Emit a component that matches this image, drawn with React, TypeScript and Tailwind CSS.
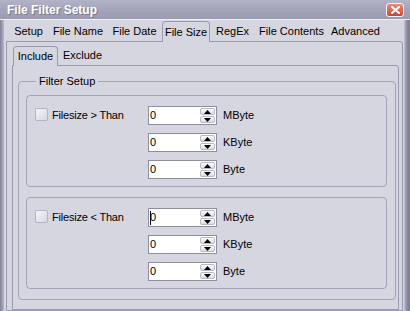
import React from 'react';

const tabs = [
  { label: 'Setup', w: 'w-[41px]' },
  { label: 'File Name', w: 'w-[58px]' },
  { label: 'File Date', w: 'w-[55px]' },
  { label: 'File Size', w: 'w-[48px]', active: true },
  { label: 'RegEx', w: 'w-[45px]' },
  { label: 'File Contents', w: 'w-[73px]' },
  { label: 'Advanced', w: 'w-[55px]' },
];

const Arrow: React.FC<{ up?: boolean }> = ({ up }) => (
  <svg width="7" height="4" viewBox="0 0 7 4">
    {up ? <path d="M3.5 0 L7 4 L0 4 Z" fill="#000" /> : <path d="M0 0 L7 0 L3.5 4 Z" fill="#000" />}
  </svg>
);

const SpinBox: React.FC<{ unit: string; caret?: boolean }> = ({ unit, caret }) => (
  <div className="flex items-center gap-[6px] h-[19px]">
    <div className="flex w-[69px] h-[19px] bg-white border border-[#8e8ea0]">
      <div className="flex-1 flex items-center pl-[1px]">
        {caret && <span className="inline-block w-[1px] h-[14px] bg-black -mr-[1px] relative" />}
        <span className="text-[11px] leading-none text-black">0</span>
      </div>
      <div className="flex flex-col w-[16px] py-[1px] pr-[1px] gap-[1px]">
        <div className="flex-1 flex items-center justify-center rounded-[2px] border border-[#b9b9c6] bg-gradient-to-b from-white to-[#dadae3]">
          <Arrow up />
        </div>
        <div className="flex-1 flex items-center justify-center rounded-[2px] border border-[#b9b9c6] bg-gradient-to-b from-white to-[#dadae3]">
          <Arrow />
        </div>
      </div>
    </div>
    <span className="text-[11px] text-black">{unit}</span>
  </div>
);

const SizeGroup: React.FC<{ label: string; caret?: boolean }> = ({ label, caret }) => (
  <div className="flex border border-[#a4a4b6] rounded-[4px] pt-[10px] pb-[7px]">
    <div className="w-[121px] h-[19px] flex items-center gap-[4px] pl-[8px]">
      <span className="w-[13px] h-[13px] -mt-[2px] rounded-[2px] border border-[#b4b4c2] bg-gradient-to-br from-[#f6f6f9] to-[#d6d6e0]" />
      <span className="text-[11px] text-black -mt-[1px] tracking-[-0.2px]">{label}</span>
    </div>
    <div className="flex flex-col gap-[8px]">
      <SpinBox unit="MByte" caret={caret} />
      <SpinBox unit="KByte" />
      <SpinBox unit="Byte" />
    </div>
  </div>
);

export default function App() {
  return (
    <div className="w-[410px] h-[311px] overflow-hidden flex flex-col bg-[#d6d6e0] font-['Liberation_Sans',Arial,sans-serif] select-none">
      {/* Title bar */}
      <div className="h-[20px] shrink-0 flex items-center justify-between pl-[7px] pr-[6px] bg-gradient-to-b from-[#b3b3c7] via-[#a4a4ba] to-[#9a9ab0] border-b border-[#f0f0f4]">
        <span className="text-[12px] font-bold text-white [text-shadow:1px_1px_0_#7a7a90]">File Filter Setup</span>
        <div className="w-[18px] h-[14px] -mb-[1px] rounded-[3px] border border-[#f4f4f8] bg-gradient-to-b from-[#ec8c78] to-[#c9452f] flex items-center justify-center">
          <svg width="9" height="8" viewBox="0 0 9 8">
            <path d="M1 1 L8 7 M8 1 L1 7" stroke="#fff" strokeWidth="2" strokeLinecap="square" />
          </svg>
        </div>
      </div>

      <div className="flex flex-1">
        {/* left frame */}
        <div className="w-[4px] bg-gradient-to-r from-[#7f7f97] via-[#9c9cb2] to-[#b8b8ca]" />

        {/* client */}
        <div className="flex-1 flex flex-col pl-[2px] pr-[1px]">
          <div className="h-[21px] flex items-end pl-[2px]">
            {tabs.map((t) =>
              t.active ? (
                <div
                  key={t.label}
                  className={`${t.w} h-[21px] -mb-[1px] relative z-10 flex items-center justify-center text-[11px] text-black bg-[#d6d6e0] border border-b-0 border-[#9a9ab0] rounded-t-[4px]`}
                >
                  {t.label}
                </div>
              ) : (
                <div key={t.label} className={`${t.w} h-[20px] flex items-center justify-center text-[11px] text-black`}>
                  {t.label}
                </div>
              )
            )}
          </div>

          {/* outer panel */}
          <div className="flex-1 border border-[#9a9ab0] rounded-tr-[3px] flex flex-col pr-[3px]">
            <div className="h-[23px] flex items-end pl-[6px]">
              <div className="w-[45px] h-[20px] -mb-[1px] relative z-10 flex items-center justify-center text-[11px] text-black bg-[#d6d6e0] border border-b-0 border-[#9a9ab0] rounded-t-[4px]">
                Include
              </div>
              <div className="w-[45px] ml-[2px] h-[19px] flex items-center justify-center text-[11px] text-black">
                Exclude
              </div>
            </div>

            {/* inner panel */}
            <div className="ml-[5px] flex-1 border border-[#9a9ab0] rounded-tr-[3px] pt-[8px] pl-[5px] pr-[2px]">
              <fieldset className="border border-[#a4a4b6] rounded-[4px] px-[7px] pr-[8px] pb-[10px]">
                <legend className="ml-[10px] px-[3px] text-[11px] leading-[14px] text-black">Filter Setup</legend>
                <div className="flex flex-col gap-[10px] pt-[7px]">
                  <SizeGroup label="Filesize > Than" />
                  <SizeGroup label="Filesize < Than" caret />
                </div>
              </fieldset>
            </div>
          </div>
        </div>

        {/* right frame */}
        <div className="w-[6px] bg-gradient-to-r from-[#c4c4d4] via-[#8a8aa2] to-[#7a7a92]" />
      </div>
    </div>
  );
}
